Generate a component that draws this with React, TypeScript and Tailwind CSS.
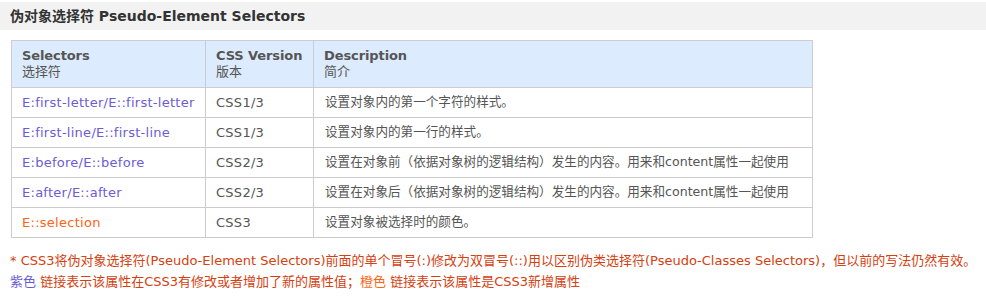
const rows = [
  { sel: "E:first-letter/E::first-letter", ver: "CSS1/3", desc: "设置对象内的第一个字符的样式。", isNew: false },
  { sel: "E:first-line/E::first-line", ver: "CSS1/3", desc: "设置对象内的第一行的样式。", isNew: false },
  { sel: "E:before/E::before", ver: "CSS2/3", desc: "设置在对象前（依据对象树的逻辑结构）发生的内容。用来和content属性一起使用", isNew: false },
  { sel: "E:after/E::after", ver: "CSS2/3", desc: "设置在对象后（依据对象树的逻辑结构）发生的内容。用来和content属性一起使用", isNew: false },
  { sel: "E::selection", ver: "CSS3", desc: "设置对象被选择时的颜色。", isNew: true },
];

const font = { fontFamily: '"DejaVu Sans", Verdana, "Noto Sans CJK SC", sans-serif' };

export default function App() {
  return (
    <div className="w-[986px] h-[303px] bg-white pt-[2px] text-[13px] text-[#555]" style={font}>
      <h2 className="h-[28px] bg-[#f2f2f2] pl-[10px] flex items-center text-[14px] font-bold text-[#333]">
        伪对象选择符 Pseudo-Element Selectors
      </h2>

      <table className="ml-[11px] mt-[10px] w-[802px] border-collapse border border-[#cccccc]">
        <thead>
          <tr className="bg-[#dcebfd] h-[47px] text-left align-middle">
            <th className="w-[194px] border border-[#cccccc] px-[10px] font-bold leading-[16px] tracking-[-0.1px]">
              Selectors<br />
              <span className="font-normal">选择符</span>
            </th>
            <th className="w-[108px] border border-[#cccccc] px-[10px] font-bold leading-[16px] tracking-[-0.1px]">
              CSS Version<br />
              <span className="font-normal">版本</span>
            </th>
            <th className="border border-[#cccccc] px-[10px] font-bold leading-[16px] tracking-[-0.1px]">
              Description<br />
              <span className="font-normal">简介</span>
            </th>
          </tr>
        </thead>
        <tbody>
          {rows.map((r) => (
            <tr key={r.sel} className="h-[30px]">
              <td className={`border border-[#cccccc] px-[10px] tracking-[0.27px] ${r.isNew ? "text-[#ff6314]" : "text-[#6b5cd6]"}`}>
                {r.sel}
              </td>
              <td className="border border-[#cccccc] px-[10px] tracking-[0.27px]">{r.ver}</td>
              <td className="border border-[#cccccc] px-[11px] text-[12.6px]">{r.desc}</td>
            </tr>
          ))}
        </tbody>
      </table>

      <div className="mt-[12px] pl-[10px] text-[13px] leading-[21px] text-[#d5400f] whitespace-nowrap">
        <p>* CSS3将伪对象选择符(Pseudo-Element Selectors)前面的单个冒号(:)修改为双冒号(::)用以区别伪类选择符(Pseudo-Classes Selectors)，但以前的写法仍然有效。</p>
        <p>
          <span className="text-[#6b5cd6]">紫色</span> 链接表示该属性在CSS3有修改或者增加了新的属性值；
          <span className="text-[#ff6314]">橙色</span> 链接表示该属性是CSS3新增属性
        </p>
      </div>
    </div>
  );
}
